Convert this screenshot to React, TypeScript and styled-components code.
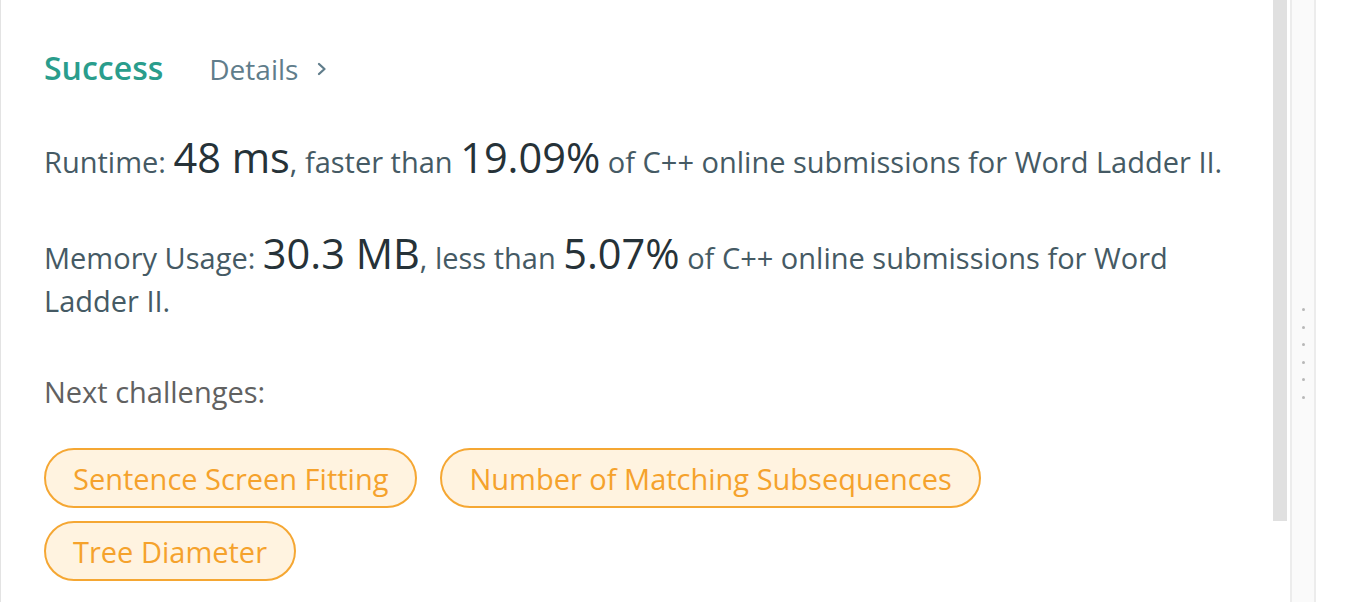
import React from "react";
import styled, { createGlobalStyle } from "styled-components";

const Global = createGlobalStyle`
  html, body { margin: 0; padding: 0; background: #ffffff; }
  body { font-family: "Open Sans", "Noto Sans", sans-serif; }
`;

const Page = styled.div`
  display: flex;
  height: 602px;
  overflow: hidden;
  border-left: 1px solid #e3e3e3;
  box-sizing: border-box;
`;

const Content = styled.div`
  flex: 1;
  padding: 46px 30px 0 43px;
  min-width: 0;
`;

const Header = styled.div`
  display: flex;
  align-items: baseline;
  gap: 46px;
  height: 90px;
`;

const Status = styled.span`
  color: #2a9d8c;
  font-size: 32px;
  font-weight: 600;
`;

const DetailsLink = styled.span`
  color: #607d8b;
  font-size: 28px;
  display: inline-flex;
  align-items: center;
  gap: 18px;
`;

const Stat = styled.p<{ $gap?: number }>`
  margin: 0 0 ${(p) => p.$gap ?? 0}px;
  color: #455a64;
  font-size: 29px;
  line-height: 43px;
`;

const Big = styled.span`
  font-size: 41.5px;
  color: #263238;
`;

const Label = styled.p`
  margin: 0 0 36px;
  color: #616161;
  font-size: 29px;
  line-height: 40px;
`;

const Tags = styled.div`
  display: flex;
  flex-wrap: wrap;
  column-gap: 23px;
  row-gap: 13px;
  max-width: 1000px;
`;

const Tag = styled.span`
  display: inline-flex;
  align-items: center;
  box-sizing: border-box;
  height: 60px;
  padding: 0 27px;
  border: 2px solid #f5a733;
  border-radius: 30px;
  background: #fff3e0;
  color: #f5a22c;
  font-size: 29px;
`;

const ScrollTrack = styled.div`
  width: 14px;
  margin-right: 3px;
`;

const ScrollThumb = styled.div`
  height: 521px;
  background: #e0e0e0;
`;

const Handle = styled.div`
  width: 22px;
  border-left: 2px solid #ececec;
  border-right: 2px solid #ececec;
  background: #fafafa;
  display: flex;
  flex-direction: column;
  align-items: center;
  justify-content: flex-start;
  padding-top: 308px;
  gap: 14.5px;
  box-sizing: content-box;
`;

const Dot = styled.span`
  width: 3px;
  height: 3px;
  border-radius: 50%;
  background: #b8b8b8;
`;

const Gutter = styled.div`
  width: 33px;
  background: #ffffff;
`;

const Chevron = () => (
  <svg width="12" height="14" viewBox="0 0 12 14" fill="none">
    <path d="M3 2l5.5 5-5.5 5" stroke="#607d8b" strokeWidth="2.3" strokeLinecap="round" strokeLinejoin="round" />
  </svg>
);

export default function App() {
  return (
    <>
      <Global />
      <Page>
        <Content>
          <Header>
            <Status>Success</Status>
            <DetailsLink>
              Details <Chevron />
            </DetailsLink>
          </Header>
          <Stat $gap={49}>
            Runtime: <Big>48 ms</Big>, faster than <Big>19.09%</Big> of C++ online submissions for Word Ladder II.
          </Stat>
          <Stat $gap={50}>
            Memory Usage: <Big>30.3 MB</Big>, less than <Big>5.07%</Big> of C++ online submissions for Word Ladder II.
          </Stat>
          <Label>Next challenges:</Label>
          <Tags>
            <Tag>Sentence Screen Fitting</Tag>
            <Tag>Number of Matching Subsequences</Tag>
            <Tag>Tree Diameter</Tag>
          </Tags>
        </Content>
        <ScrollTrack>
          <ScrollThumb />
        </ScrollTrack>
        <Handle>
          {Array.from({ length: 6 }).map((_, i) => (
            <Dot key={i} />
          ))}
        </Handle>
        <Gutter />
      </Page>
    </>
  );
}
